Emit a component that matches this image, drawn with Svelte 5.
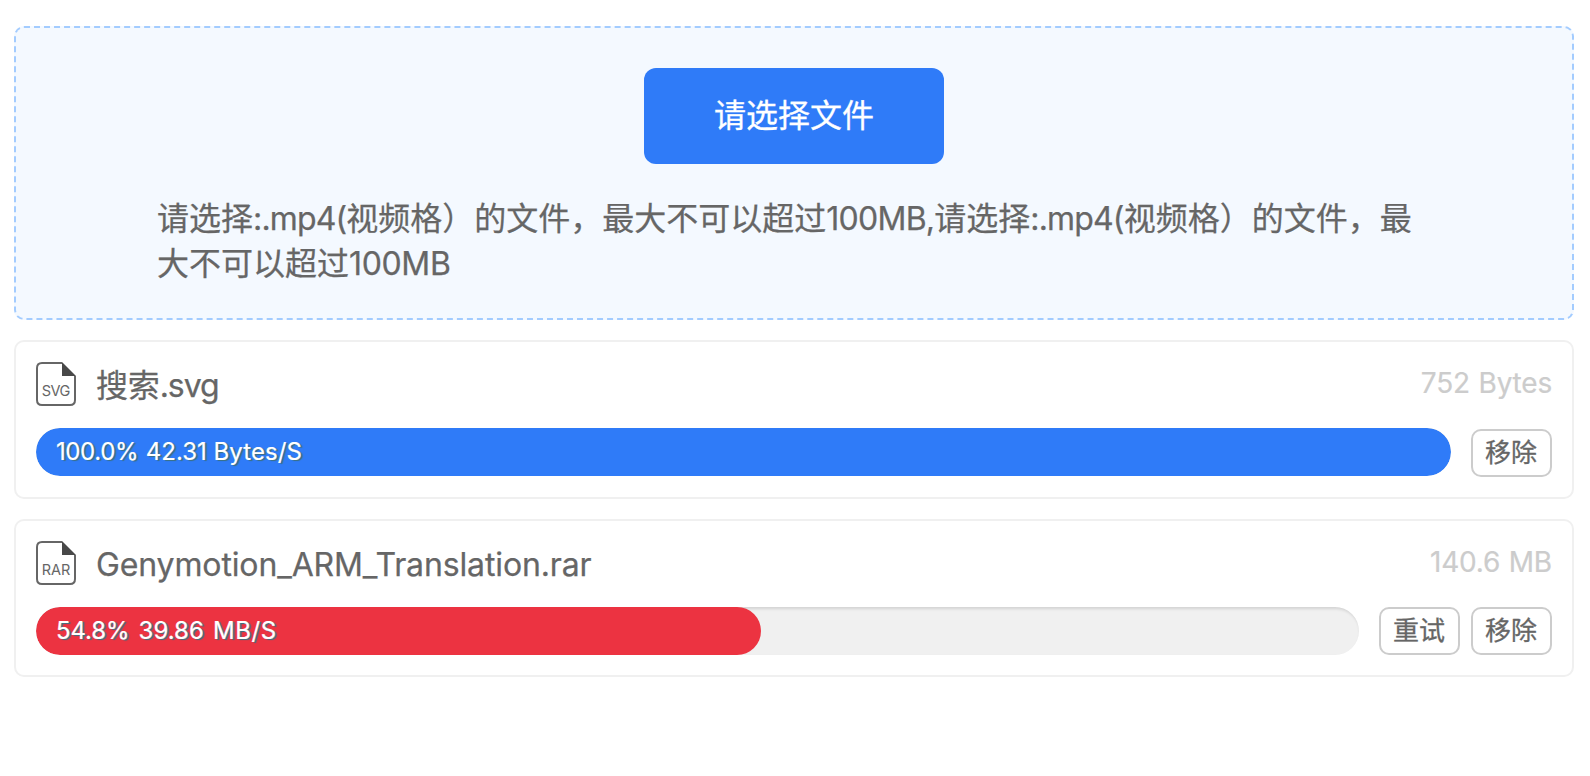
<script>
  const files = [
    { type: 'SVG', cjk: '搜索', name: '.svg', size: '752 Bytes', percent: 100, speed: '42.31', unit: 'Bytes/S', color: '#2f7bf8', failed: false },
    { type: 'RAR', cjk: '', name: 'Genymotion_ARM_Translation.rar', size: '140.6 MB', percent: 54.8, speed: '39.86', unit: 'MB/S', color: '#ec3341', failed: true }
  ];
</script>

<main>
  <section class="drop">
    <button class="pick">请选择文件</button>
    <p class="hint">请选择<span class="ext">:.mp4(</span>视频格）的文件，最大不可以超过<span class="limit">100MB,</span>请选择<span class="ext">:.mp4(</span>视频格）的文件，最大不可以超过<span class="total">100MB</span></p>
  </section>
  {#each files as file}
    <section class="card" class:done={!file.failed} class:failed={file.failed}>
      <header>
        <svg class="icon" width="40" height="44" viewBox="0 0 40 44">
          <path d="M26 1H6Q1 1 1 6V38Q1 43 6 43H34Q39 43 39 38V14" fill="none" stroke="#666" stroke-width="2" />
          <path d="M26 0L40 14H26Z" fill="#484848" />
          <text x="20" y="34" text-anchor="middle" textLength="28.5">{file.type}</text>
        </svg>
        <span class="name">{file.cjk}<span class:suffix={file.cjk}>{file.name}</span></span>
        <span class="size">{file.size}</span>
      </header>
      <div class="row">
        <div class="track">
          <div class="fill" style="width: {file.percent}%; background: {file.color}"><span class="percent">{file.percent.toFixed(1)}%</span> {file.speed} <span class="unit">{file.unit}</span></div>
        </div>
        <div class="actions">
          {#if file.failed}<button>重试</button>{/if}
          <button>移除</button>
        </div>
      </div>
    </section>
  {/each}
</main>

<style>
  :global(body) { background: #fff; }
  main {
    display: flex;
    flex-direction: column;
    gap: 20px;
    padding: 26px 16px 0 14px;
    color: #666;
    font-family: Inter, "Noto Sans CJK SC", sans-serif;
    -webkit-text-stroke: 0.25px #666;
  }
  button { font-family: inherit; padding: 0; margin: 0; }
  .drop {
    box-sizing: border-box;
    height: 294px;
    border: 2px dashed #a3ccff;
    border-radius: 10px;
    background: #f4f9ff;
    padding-top: 40px;
    display: flex;
    flex-direction: column;
    align-items: center;
  }
  .pick {
    width: 300px;
    height: 96px;
    border: 0;
    border-radius: 12px;
    background: #2f7bf8;
    color: #fff;
    font-size: 32px;
    padding-bottom: 7px;
    -webkit-text-stroke: 0.3px #fff;
  }
  .hint {
    width: 1274px;
    margin: 32px 0 0;
    font-size: 32px;
    line-height: 45px;
  }
  .ext { letter-spacing: -0.85px; }
  .limit { letter-spacing: -0.75px; }
  .total { letter-spacing: -0.35px; }
  .card {
    box-sizing: border-box;
    height: 158px;
    border: 2px solid #f0f0f0;
    border-radius: 10px;
    padding: 20px;
  }
  .done { height: 159px; }
  header { display: flex; height: 44px; align-items: center; }
  .icon { flex: none; }
  .icon text { font-size: 14.5px; fill: #666; -webkit-text-stroke: 0; }
  .name { margin-left: 20px; font-size: 32px; line-height: 44px; padding-top: 4px; letter-spacing: -0.13px; }
  .suffix { letter-spacing: -1.1px; }
  .size {
    margin-left: auto;
    font-size: 28px;
    line-height: 40px;
    color: #ccc;
    padding-bottom: 3px;
    letter-spacing: -0.2px;
    word-spacing: 1px;
    -webkit-text-stroke: 0.2px #ccc;
  }
  .row { display: flex; margin-top: 22px; gap: 20px; }
  .track {
    flex: 1;
    height: 48px;
    border-radius: 24px;
    background: #f0f0f0;
    box-shadow: inset 1px 2px 3px rgba(0, 0, 0, .12);
    overflow: hidden;
  }
  .fill {
    height: 48px;
    box-sizing: border-box;
    border-radius: 24px;
    padding-left: 20px;
    color: #fff;
    font-size: 24px;
    line-height: 47px;
    white-space: nowrap;
    word-spacing: 1px;
    text-shadow: 2px 1px 1px #3b7080;
    -webkit-text-stroke: 0.2px #fff;
  }
  .percent { letter-spacing: -0.4px; }
  .done .unit { letter-spacing: 0.1px; margin-left: -1px; }
  .failed .fill { word-spacing: 2.5px; }
  .failed .percent { letter-spacing: -0.15px; }
  .failed .unit { letter-spacing: 0.6px; }
  .actions { display: flex; gap: 11px; }
  .done .actions { padding-top: 1px; }
  .actions button {
    width: 81px;
    height: 48px;
    border: 2px solid #ccc;
    border-radius: 10px;
    background: #fff;
    color: #666;
    font-size: 26px;
    line-height: 40px;
    padding-right: 1px;
    -webkit-text-stroke: 0.3px #666;
  }
</style>
